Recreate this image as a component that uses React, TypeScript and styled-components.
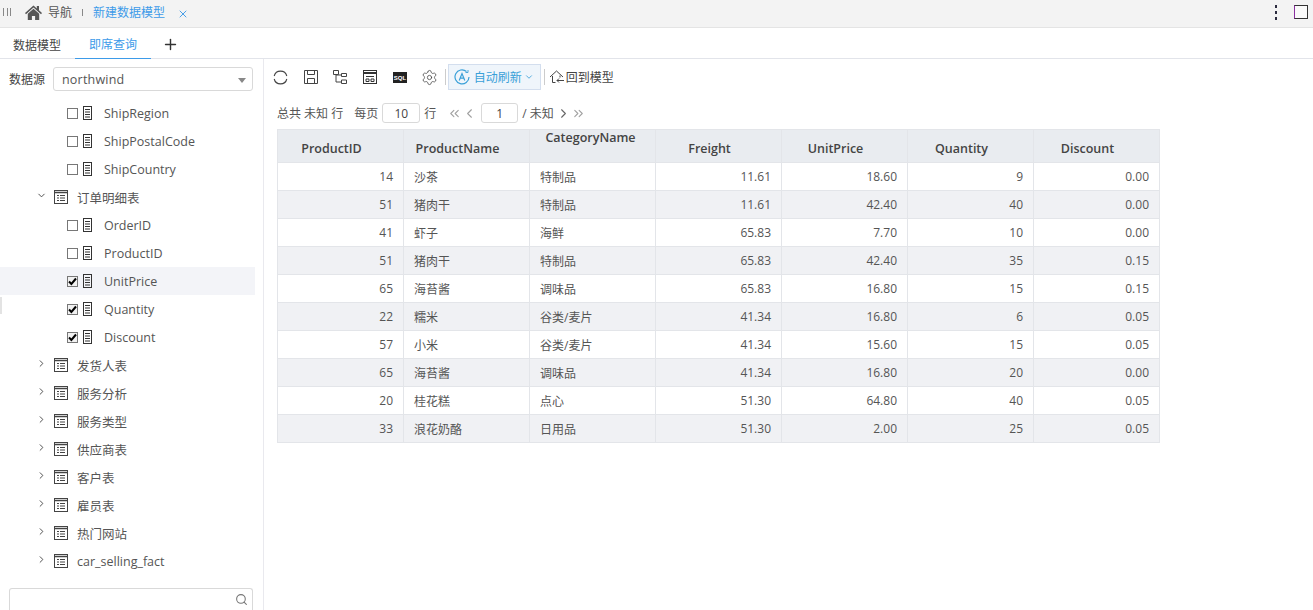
import React from "react";
import styled, { createGlobalStyle } from "styled-components";
import { X, Plus, ChevronDown, ChevronRight, ChevronLeft, ChevronsLeft, ChevronsRight, Search, Settings } from "lucide-react";

const GlobalStyle = createGlobalStyle`
  html, body { margin: 0; padding: 0; background: #fff; }
  body {
    font-family: "Open Sans", "Noto Sans CJK SC", sans-serif;
    font-size: 12px;
    color: #444;
    overflow: hidden;
  }
  * { box-sizing: border-box; }
`;

const Page = styled.div`
  width: 1313px;
  height: 610px;
  display: flex;
  flex-direction: column;
`;

const TopBar = styled.div`
  height: 28px;
  flex: none;
  display: flex;
  align-items: center;
  background: #f3f3f3;
  border-bottom: 1px solid #e4e4e4;
  padding: 0 0 3px 3px;
`;

const Grip = styled.span`
  width: 8px;
  height: 8px;
  margin-right: 14px;
  border-left: 1px solid #888;
  border-right: 1px solid #888;
  position: relative;
  &::after {
    content: "";
    position: absolute;
    left: 2.5px;
    top: 0;
    width: 1px;
    height: 8px;
    background: #888;
  }
`;

const NavLabel = styled.span`
  margin-left: 6px;
  font-size: 12px;
  color: #555;
`;

const NavDivider = styled.span`
  width: 1px;
  height: 7px;
  margin: 0 10px;
  background: #888;
`;

const ActiveDoc = styled.span`
  font-size: 12px;
  color: #3d9be9;
`;

const CloseButton = styled.span`
  display: flex;
  margin-left: 12px;
  margin-top: 3px;
  color: #4a9fe8;
`;

const TopRight = styled.div`
  margin-left: auto;
  display: flex;
  align-items: center;
  padding-right: 5px;
`;

const Dots = styled.span`
  display: flex;
  flex-direction: column;
  gap: 3px;
  margin-right: 17px;
  i {
    width: 2px;
    height: 3px;
    background: #2b2b3f;
  }
`;

const WindowBox = styled.span`
  width: 14px;
  height: 14px;
  background: #fafafa;
  border: 1px solid #333;
  border-left-color: #8a2fa0;
`;

const TabRow = styled.div`
  height: 31px;
  flex: none;
  display: flex;
  align-items: stretch;
  border-bottom: 1px solid #e2e4ea;
`;

const Tab = styled.div<{ $active?: boolean }>`
  width: ${(p) => (p.$active ? "76px" : "75px")};
  padding: 2px 0 0 ${(p) => (p.$active ? "14px" : "13px")};
  display: flex;
  align-items: center;
  font-size: 12px;
  color: ${(p) => (p.$active ? "#3d9be9" : "#444")};
  border-bottom: ${(p) => (p.$active ? "1px solid #3d9be9" : "none")};
  margin-bottom: -1px;
`;

const AddTab = styled.span`
  display: flex;
  align-items: center;
  margin: 2px 0 0 11px;
  color: #333;
`;

const Body = styled.div`
  flex: 1;
  display: flex;
  min-height: 0;
`;

const Sidebar = styled.aside`
  width: 264px;
  flex: none;
  display: flex;
  flex-direction: column;
  border-right: 1px solid #e9e9ee;
  position: relative;
`;

const SourceRow = styled.div`
  display: flex;
  align-items: center;
  height: 24px;
  margin-top: 8px;
  padding-left: 9px;
`;

const SourceLabel = styled.span`
  width: 44px;
  font-size: 12px;
  color: #444;
`;

const SourceSelect = styled.div`
  width: 200px;
  height: 24px;
  display: flex;
  align-items: center;
  justify-content: space-between;
  padding: 0 6px 0 8px;
  border: 1px solid #d9d9d9;
  border-radius: 3px;
  font-size: 12.5px;
  letter-spacing: 0.2px;
  color: #555;
`;

const Caret = styled.span`
  width: 0;
  height: 0;
  margin-top: 2px;
  border-left: 4px solid transparent;
  border-right: 4px solid transparent;
  border-top: 5px solid #888;
`;

const Tree = styled.div`
  margin-top: 8px;
  width: 255px;
`;

const TreeRow = styled.div<{ $hover?: boolean }>`
  height: 28px;
  display: flex;
  align-items: center;
  background: ${(p) => (p.$hover ? "#f3f4f8" : "transparent")};
  font-size: 12.5px;
  color: #555;
`;

const FieldRow = styled(TreeRow)`
  padding-left: 67px;
`;

const TableRow = styled(TreeRow)`
  padding-left: 36px;
`;

const Toggle = styled.span`
  width: 18px;
  margin-top: -4px;
  display: flex;
  color: #444;
`;

const CheckBox = styled.span<{ $checked?: boolean }>`
  width: 11px;
  height: 11px;
  margin-right: 5px;
  border: 1px solid #777;
  background: ${(p) => (p.$checked ? "#f1f1f1" : "#fff")};
  display: flex;
  align-items: center;
  justify-content: center;
`;

const RowText = styled.span<{ $gap: number }>`
  margin-left: ${(p) => p.$gap}px;
  white-space: nowrap;
`;

const Splitter = styled.span`
  position: absolute;
  left: 0;
  top: 238px;
  width: 2px;
  height: 17px;
  background: #e3e3e3;
`;

const SearchBox = styled.div`
  margin: auto 0 0 9px;
  width: 244px;
  height: 22px;
  display: flex;
  align-items: center;
  justify-content: flex-end;
  padding-right: 4px;
  border: 1px solid #d9d9d9;
  border-bottom: none;
  border-radius: 3px 3px 0 0;
  color: #777;
`;

const Main = styled.main`
  flex: 1;
  min-width: 0;
  padding-left: 13px;
`;

const Toolbar = styled.div`
  height: 36px;
  margin-left: -11px;
  display: flex;
  align-items: center;
`;

const ToolIcon = styled.span`
  width: 29.8px;
  display: flex;
  justify-content: center;
  color: #444;
`;

const ToolDivider = styled.span`
  width: 1px;
  height: 16px;
  background: #ccc;
`;

const AutoRefresh = styled.div`
  height: 26px;
  width: 93px;
  margin-left: 2px;
  display: flex;
  align-items: center;
  padding-left: 5px;
  background: #eff5fb;
  border: 1px solid #d3deee;
  font-size: 12px;
  color: #3aa0d8;
`;

const AutoLabel = styled.span`
  margin-left: 4px;
  margin-right: 2px;
`;

const BackLink = styled.span`
  display: flex;
  align-items: center;
  margin-left: 3px;
  gap: 1px;
  font-size: 12px;
  color: #444;
`;

const Pager = styled.div`
  height: 20px;
  margin-top: 8px;
  display: flex;
  align-items: center;
  font-size: 12px;
  color: #555;
`;

const PagerInput = styled.span<{ $w: number }>`
  width: ${(p) => p.$w}px;
  height: 20px;
  margin: 0 4px;
  display: flex;
  align-items: center;
  justify-content: center;
  border: 1px solid #d9d9d9;
  border-radius: 3px;
  color: #444;
`;

const PagerArrow = styled.span<{ $muted?: boolean }>`
  display: flex;
  color: ${(p) => (p.$muted ? "#a0a0a0" : "#666")};
`;

const PagerGap = styled.span<{ $w: number }>`
  width: ${(p) => p.$w}px;
  flex: none;
`;

const DataTable = styled.table`
  margin-top: 6px;
  width: 883px;
  border-collapse: collapse;
  table-layout: fixed;
  font-size: 12px;
  color: #555;
`;

const HeadCell = styled.th<{ $raised?: boolean }>`
  height: 33px;
  padding: ${(p) => (p.$raised ? "0 4px 0 0" : "4px 18px 0 0")};
  vertical-align: ${(p) => (p.$raised ? "top" : "middle")};
  line-height: ${(p) => (p.$raised ? "15px" : "normal")};
  background: #e9ecf0;
  border: 1px solid #e3e5e9;
  font-size: 12.5px;
  font-weight: 600;
  color: #444;
  text-align: center;
`;

const BodyRow = styled.tr<{ $alt: boolean }>`
  background: ${(p) => (p.$alt ? "#f0f1f4" : "#fff")};
`;

const Cell = styled.td<{ $num?: boolean }>`
  height: 28px;
  padding: 0 10px;
  border: 1px solid #e3e5e9;
  text-align: ${(p) => (p.$num ? "right" : "left")};
`;

const fieldIcon = (
  <svg width="9" height="14" viewBox="0 0 9 14" fill="none" stroke="#333">
    <rect x="0.5" y="0.5" width="8" height="13" />
    <path d="M2 3.5h5M2 6h5M2 8.5h5M2 11h5" />
  </svg>
);

const tableIcon = (
  <svg width="14" height="14" viewBox="0 0 14 14" fill="none" stroke="#444">
    <rect x="0.5" y="0.5" width="13" height="13" />
    <path d="M0.5 2.5h13" strokeWidth="1.5" />
    <path d="M3 5.5h2M6 5.5h5M3 8h2M6 8h5M3 10.5h2M6 10.5h5" />
  </svg>
);

const checkMark = (
  <svg width="9" height="9" viewBox="0 0 9 9" fill="none" stroke="#000" strokeWidth="2">
    <path d="M1 4.5l2.4 2.5L8 1.5" />
  </svg>
);

type TreeItem =
  | { kind: "field"; name: string; checked?: boolean; hover?: boolean }
  | { kind: "table"; name: string; open?: boolean };

const treeItems: TreeItem[] = [
  { kind: "field", name: "ShipRegion" },
  { kind: "field", name: "ShipPostalCode" },
  { kind: "field", name: "ShipCountry" },
  { kind: "table", name: "订单明细表", open: true },
  { kind: "field", name: "OrderID" },
  { kind: "field", name: "ProductID" },
  { kind: "field", name: "UnitPrice", checked: true, hover: true },
  { kind: "field", name: "Quantity", checked: true },
  { kind: "field", name: "Discount", checked: true },
  { kind: "table", name: "发货人表" },
  { kind: "table", name: "服务分析" },
  { kind: "table", name: "服务类型" },
  { kind: "table", name: "供应商表" },
  { kind: "table", name: "客户表" },
  { kind: "table", name: "雇员表" },
  { kind: "table", name: "热门网站" },
  { kind: "table", name: "car_selling_fact" },
];

const columns = ["ProductID", "ProductName", "CategoryName", "Freight", "UnitPrice", "Quantity", "Discount"];

const rows: [number, string, string, string, string, number, string][] = [
  [14, "沙茶", "特制品", "11.61", "18.60", 9, "0.00"],
  [51, "猪肉干", "特制品", "11.61", "42.40", 40, "0.00"],
  [41, "虾子", "海鲜", "65.83", "7.70", 10, "0.00"],
  [51, "猪肉干", "特制品", "65.83", "42.40", 35, "0.15"],
  [65, "海苔酱", "调味品", "65.83", "16.80", 15, "0.15"],
  [22, "糯米", "谷类/麦片", "41.34", "16.80", 6, "0.05"],
  [57, "小米", "谷类/麦片", "41.34", "15.60", 15, "0.05"],
  [65, "海苔酱", "调味品", "41.34", "16.80", 20, "0.00"],
  [20, "桂花糕", "点心", "51.30", "64.80", 40, "0.05"],
  [33, "浪花奶酪", "日用品", "51.30", "2.00", 25, "0.05"],
];

export default function App() {
  return (
    <Page>
      <GlobalStyle />
      <TopBar>
        <Grip />
        <svg width="17" height="15" viewBox="0 0 17 15" fill="#555">
          <path d="M8.5 0.5L0 8l1 1.2 7.5-6.6L16 9.2 17 8l-3-2.7V1h-2.2v2.4z" />
          <path d="M8.5 3.8L2.8 8.8V15h4.1v-4h3.2v4h4.1V8.8z" />
        </svg>
        <NavLabel>导航</NavLabel>
        <NavDivider />
        <ActiveDoc>新建数据模型</ActiveDoc>
        <CloseButton>
          <X size={12} />
        </CloseButton>
        <TopRight>
          <Dots>
            <i />
            <i />
            <i />
          </Dots>
          <WindowBox />
        </TopRight>
      </TopBar>
      <TabRow>
        <Tab>数据模型</Tab>
        <Tab $active>即席查询</Tab>
        <AddTab>
          <Plus size={17} strokeWidth={2} />
        </AddTab>
      </TabRow>
      <Body>
        <Sidebar>
          <SourceRow>
            <SourceLabel>数据源</SourceLabel>
            <SourceSelect>
              northwind
              <Caret />
            </SourceSelect>
          </SourceRow>
          <Tree>
            {treeItems.map((item) =>
              item.kind === "field" ? (
                <FieldRow key={item.name} $hover={item.hover}>
                  <CheckBox $checked={item.checked}>{item.checked && checkMark}</CheckBox>
                  {fieldIcon}
                  <RowText $gap={12}>{item.name}</RowText>
                </FieldRow>
              ) : (
                <TableRow key={item.name}>
                  <Toggle>{item.open ? <ChevronDown size={11} /> : <ChevronRight size={11} />}</Toggle>
                  {tableIcon}
                  <RowText $gap={9}>{item.name}</RowText>
                </TableRow>
              )
            )}
          </Tree>
          <Splitter />
          <SearchBox>
            <Search size={13} />
          </SearchBox>
        </Sidebar>
        <Main>
          <Toolbar>
            <ToolIcon>
              <svg width="15" height="15" viewBox="0 0 15 15" fill="none" stroke="#444" strokeWidth="1.1">
                <path d="M1.2 6A6.5 6.5 0 0 1 13.8 6M13.8 9A6.5 6.5 0 0 1 1.2 9" />
              </svg>
            </ToolIcon>
            <ToolIcon>
              <svg width="14" height="14" viewBox="0 0 14 14" fill="none" stroke="#444">
                <path d="M0.5 0.5h13v13h-13zM3.5 0.5v4h7v-4M3.5 13.5v-5h7v5" />
              </svg>
            </ToolIcon>
            <ToolIcon>
              <svg width="14" height="14" viewBox="0 0 14 14" fill="none" stroke="#444">
                <path d="M0.5 0.5h5v4h-5zM8.5 3.5h5v3h-5zM8.5 10h5v3.5h-5zM3 4.5V12h5.5M3 5h5.5" />
              </svg>
            </ToolIcon>
            <ToolIcon>
              <svg width="14" height="14" viewBox="0 0 14 14" fill="none" stroke="#333">
                <rect x="0.5" y="0.5" width="13" height="13" />
                <path d="M0.5 3h13" strokeWidth="2" />
                <path d="M3 6.5h8M3 9h3v2.5H3zM8 9h3v2.5H8z" />
              </svg>
            </ToolIcon>
            <ToolIcon>
              <svg width="14" height="11" viewBox="0 0 14 11">
                <rect width="14" height="11" fill="#222" />
                <text x="7" y="8" fontSize="6" fontWeight="700" fill="#fff" textAnchor="middle" fontFamily="Liberation Sans, sans-serif">
                  SQL
                </text>
              </svg>
            </ToolIcon>
            <ToolIcon>
              <Settings size={17} strokeWidth={1.1} />
            </ToolIcon>
            <ToolDivider />
            <AutoRefresh>
              <svg width="16" height="16" viewBox="0 0 16 16" fill="none" stroke="#3aa0d8" strokeWidth="1.2">
                <path d="M12.5 2.5A7 7 0 1 0 15 8" />
                <path d="M5.2 11.5L8 4.5l2.8 7M6.2 9.2h3.6" />
                <path d="M11.5 3.5h2.5V1" strokeWidth="0.9" />
              </svg>
              <AutoLabel>自动刷新</AutoLabel>
              <ChevronDown size={10} />
            </AutoRefresh>
            <BackLink>
              <ToolDivider />
              <svg width="16" height="14" viewBox="0 0 16 14" fill="none" stroke="#444" style={{ marginLeft: 3 }}>
                <path d="M1 7l6.5-6L14 7M3.5 6v6.5h3M11 5.5v2M8 10.5h7M10 8.5l-2 2 2 2" />
              </svg>
              回到模型
            </BackLink>
          </Toolbar>
          <Pager>
            总共 未知 行
            <PagerGap $w={11} />
            每页
            <PagerInput $w={38}>10</PagerInput>
            行
            <PagerGap $w={11} />
            <PagerArrow $muted>
              <ChevronsLeft size={15} strokeWidth={1.7} />
            </PagerArrow>
            <PagerArrow $muted>
              <ChevronLeft size={15} strokeWidth={1.7} />
            </PagerArrow>
            <PagerInput $w={37}>1</PagerInput>
            / 未知
            <PagerGap $w={2} />
            <PagerArrow>
              <ChevronRight size={15} strokeWidth={1.7} />
            </PagerArrow>
            <PagerArrow $muted>
              <ChevronsRight size={15} strokeWidth={1.7} />
            </PagerArrow>
          </Pager>
          <DataTable>
            <thead>
              <tr>
                {columns.map((c) => (
                  <HeadCell key={c} $raised={c === "CategoryName"}>
                    {c}
                  </HeadCell>
                ))}
              </tr>
            </thead>
            <tbody>
              {rows.map((r, i) => (
                <BodyRow key={i} $alt={i % 2 === 1}>
                  <Cell $num>{r[0]}</Cell>
                  <Cell>{r[1]}</Cell>
                  <Cell>{r[2]}</Cell>
                  <Cell $num>{r[3]}</Cell>
                  <Cell $num>{r[4]}</Cell>
                  <Cell $num>{r[5]}</Cell>
                  <Cell $num>{r[6]}</Cell>
                </BodyRow>
              ))}
            </tbody>
          </DataTable>
        </Main>
      </Body>
    </Page>
  );
}
